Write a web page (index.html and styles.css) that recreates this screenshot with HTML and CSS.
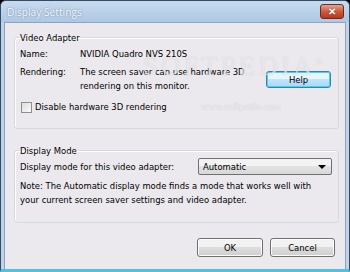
FILE: index.html
```html
<!DOCTYPE html>
<html>
    <head>
        <meta charset="UTF-8">
        <title>Display Settings</title>
        <link rel="stylesheet" href="styles.css">
    </head>
    <body>
        <div class="window">
            <div class="titlebar">
                <span class="title">Display Settings</span>
                <span class="close">&#x2715;</span>
            </div>
            <div class="client">
                <fieldset class="group group1">
                    <legend>Video Adapter</legend>
                    <div class="row row-name">
                        <span class="label">Name:</span>
                        <span class="value">NVIDIA Quadro NVS 210S</span>
                    </div>
                    <div class="row row-render">
                        <span class="label">Rendering:</span>
                        <span class="value">The screen saver can use hardware 3D<br>rendering on this monitor.</span>
                        <span class="btn btn-help">Help</span>
                    </div>
                    <div class="check">
                        <span class="box"></span>
                        <span>Disable hardware 3D rendering</span>
                    </div>
                </fieldset>

                <fieldset class="group group2">
                    <legend>Display Mode</legend>
                    <div class="row row-mode">
                        <span>Display mode for this video adapter:</span>
                        <span class="select">Automatic<span class="arrow"></span></span>
                    </div>
                    <p class="note">Note: The Automatic display mode finds a mode that works well with<br>your current screen saver settings and video adapter.</p>
                </fieldset>

                <div class="buttons">
                    <span class="btn">OK</span>
                    <span class="btn">Cancel</span>
                </div>

                <div class="mark">SOFTPEDIA<sup>&reg;</sup></div>
                <div class="mark-url">www.softpedia.com</div>
            </div>
        </div>
    </body>
</html>
```

FILE: styles.css
```css
body{
    margin: 0;
    background: #000;
    font-family: "DejaVu Sans Condensed", "Liberation Sans", Arial, sans-serif;
    font-size: 9.4px;
    color: #000;
}
/* 창 전체 */
.window{
    width: 350px;
    height: 272px;
    box-sizing: border-box;
    border: 1px solid #384a60;
    border-bottom: 3px solid #4cc3e6;
    border-radius: 6px 6px 0 0;
    background: #bed3ea;
    display: flex;
    flex-direction: column;
    overflow: hidden;
}
/* 제목줄 */
.titlebar{
    height: 21px;
    flex: none;
    display: flex;
    align-items: center;
    justify-content: space-between;
    padding: 0 5px 0 6px;
    background: linear-gradient(#c7dbef, #aec8e4);
}
.title{
    font-family: "Open Sans", "Liberation Sans", sans-serif;
    font-size: 10.2px;
    color: #f6f9fc;
    text-shadow: 0 0 2px #7d95b2, 0 0 1px #8aa0bb;
}
.close{
    width: 22px;
    height: 13px;
    border: 1px solid #6e2a1f;
    border-radius: 3px;
    background: linear-gradient(#e3a592, #cc5a40 50%, #b8371f);
    color: #fff;
    font-family: "Liberation Sans", sans-serif;
    font-size: 10px;
    font-weight: bold;
    line-height: 13px;
    text-align: center;
    text-shadow: 0 0 1px #6e2a1f;
}
/* 내용영역 */
.client{
    position: relative;
    flex: 1;
    margin: 0 3px;
    border: 1px solid #8ea3bd;
    border-bottom: none;
    background: #ebe9ed;
    padding: 8px 6px 0 9px;
    display: flex;
    flex-direction: column;
}
/* 그룹박스 */
.group{
    margin: 0;
    border: 1px solid #d3d9df;
    border-radius: 3px;
    padding: 0 5px;
    box-sizing: border-box;
    box-shadow: inset 1px 1px 0 #fff;
}
.group legend{
    padding: 0 1px;
    margin-left: -1px;
    line-height: 13px;
}
.group1{
    height: 98px;
}
.group2{
    margin-top: 15px;
    height: 79px;
}
.row{
    display: flex;
    align-items: flex-start;
    line-height: 14px;
    white-space: nowrap;
}
.label{
    width: 60px;
    flex: none;
}
.row-name{
    margin-top: 3px;
}
.row-render{
    margin-top: 4px;
}
.btn{
    width: 65px;
    height: 17px;
    box-sizing: border-box;
    border: 1px solid #707070;
    border-radius: 3px;
    background: linear-gradient(#f2f2f2 50%, #dddddd 50%, #cfcfcf);
    text-align: center;
    line-height: 15px;
    box-shadow: inset 0 0 0 1px #fcfcfc;
}
.btn-help{
    margin-left: auto;
    margin-right: 2px;
    margin-top: 6px;
    border-color: #3c7fb1;
    box-shadow: inset 0 0 0 1px #48d0f8;
    background: linear-gradient(#eaf6fd 50%, #bee6fd 50%, #a7d9f5);
}
/* 체크박스 */
.check{
    display: flex;
    align-items: center;
    gap: 3px;
    margin-top: 7px;
    margin-left: 1px;
    line-height: 14px;
}
.box{
    width: 11px;
    height: 11px;
    border: 1px solid #8e8f8f;
    background: linear-gradient(135deg, #dcdcdc, #fbfbfb);
    box-sizing: border-box;
}
/* 표시모드 */
.row-mode{
    align-items: center;
    justify-content: space-between;
    margin-top: 1px;
}
.select{
    position: relative;
    width: 134px;
    height: 17px;
    border: 1px solid #707070;
    border-radius: 2px;
    background: linear-gradient(#f3f3f3 50%, #e2e2e2 50%, #d8d8d8);
    padding-left: 4px;
    box-sizing: border-box;
    line-height: 15px;
    margin-right: 1px;
}
.arrow{
    position: absolute;
    right: 5px;
    top: 6px;
    border-left: 4px solid transparent;
    border-right: 4px solid transparent;
    border-top: 4px solid #000;
}
.note{
    margin: 4px 0 0;
    line-height: 14px;
    white-space: nowrap;
}
/* 하단 버튼 */
.buttons{
    display: flex;
    justify-content: flex-end;
    gap: 7px;
    margin-top: 15px;
    padding-right: 4px;
}
.buttons .btn{
    height: 19px;
    line-height: 17px;
}
.buttons .btn:first-child{
    width: 66px;
}
/* 워터마크 */
.mark{
    position: absolute;
    left: 138px;
    top: 28px;
    font-family: "Liberation Serif", serif;
    font-size: 27px;
    letter-spacing: 3px;
    color: rgba(255,255,255,0.55);
    text-shadow: 0 0 1px rgba(150,150,150,0.4);
}
.mark sup{
    font-size: 10px;
}
.mark-url{
    position: absolute;
    left: 196px;
    top: 78px;
    font-family: "Liberation Serif", serif;
    font-size: 10px;
    color: rgba(255,255,255,0.7);
    text-shadow: 0 0 1px rgba(140,140,140,0.5);
}
```
